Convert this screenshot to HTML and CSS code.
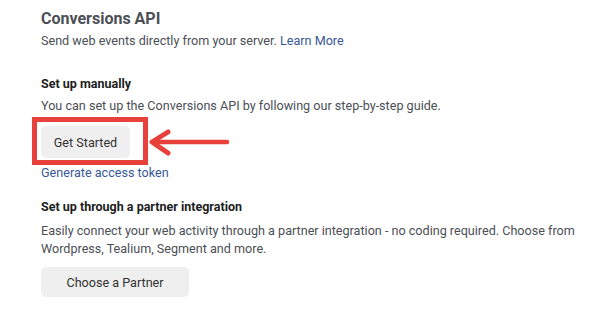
FILE: index.html
```html
<!DOCTYPE html>
<html lang="en">

<head>
    <meta charset="UTF-8">
    <meta name="viewport" content="width=device-width, initial-scale=1.0">
    <title>Conversions API</title>
    <link rel="stylesheet" href="styles.css">
</head>

<body>
    <div class="panel">
        <h1 class="title">Conversions API</h1>
        <p class="text">Send web events directly from your server. <a class="link" href="#">Learn More</a></p>

        <h2 class="heading first">Set up manually</h2>
        <p class="text">You can set up the Conversions API by following our step-by-step guide.</p>
        <div class="highlight">
            <button class="button start" type="button">Get Started</button>
            <div class="marker"></div>
            <svg class="arrow" width="84" height="30" viewBox="0 0 84 30">
                <path d="M7 15 H80" stroke="#e8403a" stroke-width="4.5" stroke-linecap="round" fill="none"/>
                <path d="M21 5 L5 15 L21 26" stroke="#e8403a" stroke-width="5" stroke-linecap="round" stroke-linejoin="round" fill="none"/>
            </svg>
        </div>
        <a class="link token" href="#">Generate access token</a>

        <h2 class="heading">Set up through a partner integration</h2>
        <p class="text wide">Easily connect your web activity through a partner integration - no coding required. Choose from Wordpress, Tealium, Segment and more.</p>
        <button class="button partner" type="button">Choose a Partner</button>
    </div>
</body>

</html>
```

FILE: styles.css
```css
body {
    margin: 0;
    font-family: Roboto, "Liberation Sans", sans-serif;
    background-color: #fff;
    color: #444950;
}

.panel {
    padding: 9px 0 0 41px;
}

.title {
    margin: 0;
    font-size: 16px;
    line-height: 20px;
    font-weight: 700;
    color: #4b4f56;
}

.text {
    margin: 3px 0 0;
    font-size: 12.6px;
    line-height: 18px;
    color: #4b4f56;
}

.heading + .text {
    margin-top: 5px;
}

.heading + .wide {
    margin-top: 7px;
}

.wide {
    width: 545px;
}

.link {
    color: #385898;
    text-decoration: none;
}

.heading {
    margin: 17px 0 0;
    font-size: 12.5px;
    line-height: 16px;
    font-weight: 700;
    color: #1c1e21;
}

.heading.first {
    margin-top: 26px;
}

.text + .highlight {
    margin-top: 4px;
}

.highlight {
    position: relative;
    height: 38px;
}

.button {
    display: block;
    border: none;
    border-radius: 5px;
    background-color: #efefef;
    font-family: Roboto, "Liberation Sans", sans-serif;
    font-size: 12.6px;
    color: #333;
    padding: 0;
}

.start {
    position: relative;
    top: 7px;
    width: 89px;
    height: 32px;
}

.marker {
    position: absolute;
    left: -9px;
    top: -2px;
    width: 106px;
    height: 38px;
    border: 5px solid #e8403a;
}

.arrow {
    position: absolute;
    left: 106px;
    top: 8px;
}

.token {
    display: block;
    margin-top: 7px;
    font-size: 12.6px;
    line-height: 18px;
}

.partner {
    margin-top: 9px;
    width: 148px;
    height: 30px;
}
```
